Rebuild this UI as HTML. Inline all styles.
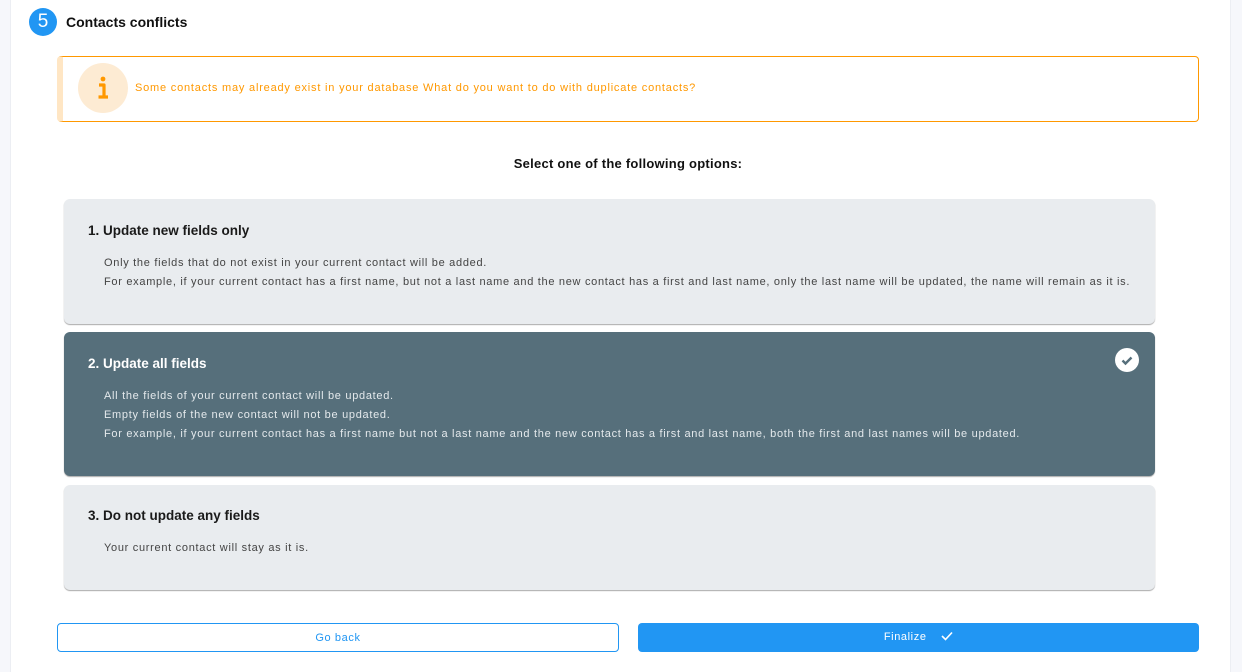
<!DOCTYPE html>
<html><head><style>
*{box-sizing:border-box;margin:0;padding:0}
body{width:1242px;height:672px;background:#f6f7fb;font-family:"Liberation Sans",sans-serif;position:relative;overflow:hidden}
.panel{position:absolute;left:10px;top:0;width:1221px;height:672px;background:#fff;border-left:1px solid #eceef3;border-right:1px solid #eceef3}
.num{position:absolute;left:29px;top:8px;width:28px;height:28px;border-radius:50%;background:#2196f3;color:#fff;font-size:19px;text-align:center;line-height:27px}
.title{position:absolute;left:66px;top:14px;font-size:14px;font-weight:bold;color:#111}
.alert{position:absolute;left:57px;top:56px;width:1142px;height:66px;border:1px solid #ff9800;border-radius:4px;border-left:6px solid #ffe6c4}
.icon{position:absolute;left:78px;top:63px;width:50px;height:50px;border-radius:50%;background:#fdebd3}
.atext{position:absolute;left:135px;top:82px;font-size:11px;color:#ff9800;letter-spacing:0.8px}
.sel{position:absolute;left:0;width:1242px;top:156px;text-align:center;font-size:13px;font-weight:bold;color:#111;padding-left:14px;letter-spacing:0.25px}
.card{position:absolute;left:64px;width:1091px;border-radius:6px;background:#e9ecef;box-shadow:0 1px 1px #aaa;color:#444}
.card h3{position:absolute;left:24px;font-size:13.5px;font-weight:bold;color:#1a1a1a}
.card p{position:absolute;left:40px;font-size:11px;line-height:19px;letter-spacing:0.7px}
.dark{background:#566f7b;color:#e4e9ec}
.dark h3{color:#fff}
.chk{position:absolute;right:16px;top:16px;width:24px;height:24px;border-radius:50%;background:#fff}
.btn{position:absolute;top:623px;height:29px;border-radius:4px;font-size:11px;text-align:center;line-height:28px;letter-spacing:0.6px}
</style></head><body>
<div class="panel"></div>
<div class="num">5</div>
<div class="title">Contacts conflicts</div>
<div class="alert"></div>
<div class="icon"><svg width="50" height="50"><circle cx="25" cy="16" r="2.4" fill="#ff9800"/><path d="M21 22h5v12M20.5 34h9.5" stroke="#ff9800" stroke-width="3.2" fill="none" stroke-linejoin="round"/></svg></div>
<div class="atext">Some contacts may already exist in your database What do you want to do with duplicate contacts?</div>
<div class="sel">Select one of the following options:</div>
<div class="card" style="top:199px;height:125px"><h3 style="top:24px">1. Update new fields only</h3>
<p style="top:55px">Only the fields that do not exist in your current contact will be added.<br>For example, if your current contact has a first name, but not a last name and the new contact has a first and last name, only the last name will be updated, the name will remain as it is.</p></div>
<div class="card dark" style="top:332px;height:144px"><h3 style="top:24px">2. Update all fields</h3>
<div class="chk"><svg width="24" height="24"><path d="M7.5 12.5l3 3 6-6" stroke="#566f7b" stroke-width="2.4" fill="none"/></svg></div>
<p style="top:55px">All the fields of your current contact will be updated.<br>Empty fields of the new contact will not be updated.<br>For example, if your current contact has a first name but not a last name and the new contact has a first and last name, both the first and last names will be updated.</p></div>
<div class="card" style="top:485px;height:105px"><h3 style="top:23px">3. Do not update any fields</h3>
<p style="top:54px">Your current contact will stay as it is.</p></div>
<div class="btn" style="left:57px;width:562px;border:1px solid #2196f3;color:#2196f3">Go back</div>
<div class="btn" style="left:638px;width:561px;background:#2196f3;color:#fff">Finalize &nbsp;&nbsp;&nbsp;<svg width="12" height="10" style="vertical-align:-1px"><path d="M1 5l3.5 3.5L11 1.5" stroke="#fff" stroke-width="1.6" fill="none"/></svg></div>
</body></html>
